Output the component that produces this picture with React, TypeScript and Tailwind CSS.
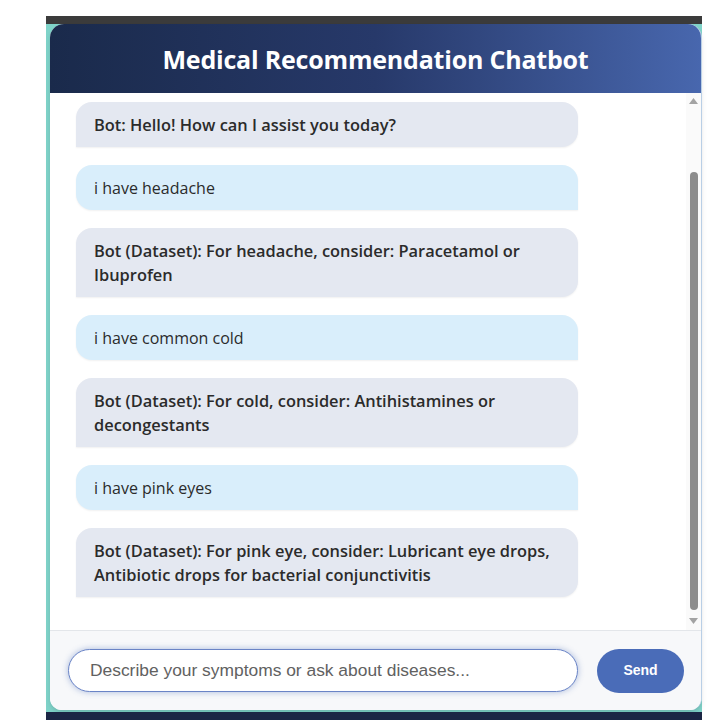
import React from 'react';

type Msg = { from: 'bot' | 'user'; text: string };

const messages: Msg[] = [
  { from: 'bot', text: 'Bot: Hello! How can I assist you today?' },
  { from: 'user', text: 'i have headache' },
  { from: 'bot', text: 'Bot (Dataset): For headache, consider: Paracetamol or Ibuprofen' },
  { from: 'user', text: 'i have common cold' },
  { from: 'bot', text: 'Bot (Dataset): For cold, consider: Antihistamines or decongestants' },
  { from: 'user', text: 'i have pink eyes' },
  {
    from: 'bot',
    text: 'Bot (Dataset): For pink eye, consider: Lubricant eye drops, Antibiotic drops for bacterial conjunctivitis',
  },
];

const ScrollBar: React.FC = () => (
  <div className="w-[15px] flex flex-col items-center bg-[#fafafa] py-[4px]">
    <svg width="9" height="6" viewBox="0 0 9 6" className="mt-[1px]">
      <path d="M0 6 L4.5 0 L9 6 Z" fill="#a3a3a3" />
    </svg>
    <div className="flex-1 w-full flex flex-col items-center pt-[68px] pb-[8px]">
      <div className="w-[8px] flex-1 rounded-full bg-[#8c8c8c]" />
    </div>
    <svg width="9" height="6" viewBox="0 0 9 6" className="mb-[2px]">
      <path d="M0 0 L9 0 L4.5 6 Z" fill="#a3a3a3" />
    </svg>
  </div>
);

const App: React.FC = () => {
  return (
    <div className="w-[725px] h-[720px] bg-white pt-[16px] pl-[46px]">
      <div className="w-[656px] h-[704px] flex flex-col">
        <div className="h-[8px] bg-[#3b3b3b]" />
        <div className="flex-1 bg-[#7fd3c9] pl-[4px] flex flex-col">
          <div className="flex-1 flex flex-col rounded-t-[14px] rounded-b-[12px] overflow-hidden bg-white border-r border-[#b9cfe6] shadow-md">
            {/* Header */}
            <div className="h-[69px] flex items-center justify-center pt-[3px] bg-gradient-to-r from-[#1a2a4b] via-[#27396a] to-[#4867ae]">
              <h1 className="text-white text-[25px] font-bold tracking-[-0.2px] font-['Open_Sans',sans-serif]">
                Medical Recommendation Chatbot
              </h1>
            </div>

            {/* Messages */}
            <div className="h-[537px] flex bg-white">
              <div className="flex-1 flex flex-col gap-[18px] pt-[9px] pl-[26px]">
                {messages.map((m, i) => (
                  <div
                    key={i}
                    className={`w-[502px] px-[18px] py-[10.5px] leading-[24px] text-[#2b2b2b] font-['Open_Sans',sans-serif] shadow-[0_1px_2px_rgba(0,0,0,0.06)] ${
                      m.from === 'bot'
                        ? 'bg-[#e4e8f1] text-[16.4px] font-semibold rounded-t-[16px] rounded-br-[16px]'
                        : 'bg-[#d9eefb] text-[16px] rounded-t-[16px] rounded-bl-[16px]'
                    }`}
                  >
                    {m.text}
                  </div>
                ))}
              </div>
              <ScrollBar />
            </div>

            {/* Input */}
            <div className="flex-1 flex items-center gap-[19px] pl-[18px] bg-[#f7f8fa] border-t border-[#e3e6ea]">
              <input
                type="text"
                placeholder="Describe your symptoms or ask about diseases..."
                className="w-[510px] h-[43px] rounded-full border-[1.5px] border-[#6a84c6] bg-white pl-[21px] pr-4 text-[17.4px] font-['Liberation_Sans',Arial,sans-serif] placeholder:text-[#616161] shadow-[0_0_6px_rgba(74,108,184,0.45)] outline-none"
              />
              <button className="w-[87px] h-[44px] rounded-full bg-[#4a6cb8] text-white text-[14px] font-bold font-['Liberation_Sans',Arial,sans-serif]">
                Send
              </button>
            </div>
          </div>
          <div className="h-[2px]" />
        </div>
        <div className="h-[8px] bg-[#1b2544]" />
      </div>
    </div>
  );
};

export default App;
